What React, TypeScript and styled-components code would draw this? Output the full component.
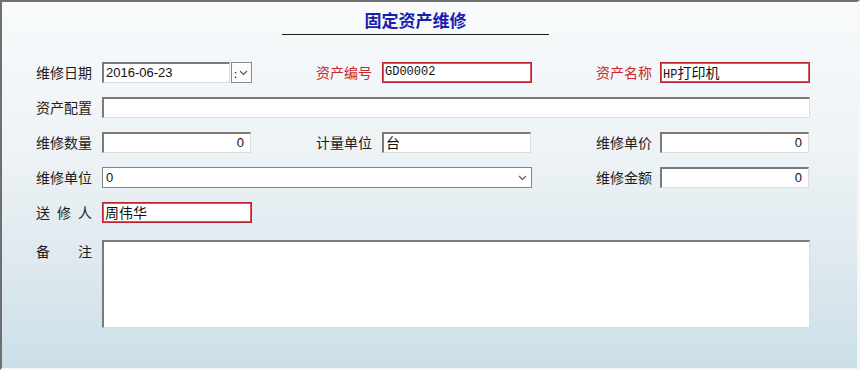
import styled, { createGlobalStyle, css } from "styled-components";

const GlobalStyle = createGlobalStyle`
  html, body {
    margin: 0;
    padding: 0;
    background: #ffffff;
  }
  * {
    box-sizing: border-box;
  }
`;

const Window = styled.div`
  width: 860px;
  height: 370px;
  border-top: 2px solid #6f6f6f;
  border-left: 2px solid #6f6f6f;
  border-right: 3px solid #f4f7f9;
  border-bottom: 2px solid #f4f7f9;
  background: linear-gradient(to bottom, #f8fafb 0%, #eef3f6 40%, #dfe9ef 70%, #cbdfe8 100%);
  font-family: "Noto Sans CJK SC", "Liberation Sans", sans-serif;
  display: flex;
  flex-direction: column;
  align-items: stretch;
`;

const Header = styled.div`
  display: flex;
  justify-content: center;
  padding-top: 7px;
`;

const Title = styled.h1`
  margin: 0;
  width: 267px;
  text-align: center;
  font-size: 17px;
  font-weight: 700;
  line-height: 22px;
  color: #1a20ad;
  padding-bottom: 3px;
  border-bottom: 1px solid #1a1a1a;
  transform: translateX(-14px);
`;

const Form = styled.div`
  display: grid;
  grid-template-columns: 66px 214px 66px 214px 64px 150px;
  grid-auto-rows: 21px;
  row-gap: 14px;
  padding: 27px 0 0 34px;
`;

const Label = styled.div<{ $red?: boolean; $wide?: boolean }>`
  font-size: 14px;
  line-height: 21px;
  color: ${(p) => (p.$red ? "#c8282d" : "#1c1c1c")};
  white-space: nowrap;
  letter-spacing: ${(p) => (p.$wide ? "7px" : "0")};
`;

const sunken = css`
  height: 21px;
  background: #ffffff;
  border-top: 2px solid #7a7a7a;
  border-left: 2px solid #7a7a7a;
  border-right: 1px solid #dcdcdc;
  border-bottom: 1px solid #dcdcdc;
`;

const Field = styled.div<{ $w: number; $red?: boolean; $align?: "right"; $span?: number; $mono?: boolean }>`
  ${sunken}
  width: ${(p) => p.$w}px;
  grid-column: ${(p) => (p.$span ? `span ${p.$span}` : "auto")};
  text-align: ${(p) => p.$align ?? "left"};
  padding: 0 6px 0 2px;
  line-height: 17px;
  font-size: ${(p) => (p.$mono ? "12px" : "13px")};
  color: #111;
  font-family: ${(p) =>
    p.$mono
      ? `"Liberation Mono", "Noto Sans CJK SC", monospace`
      : `"Liberation Sans", "Noto Sans CJK SC", sans-serif`};
  white-space: nowrap;
  overflow: hidden;
  ${(p) =>
    p.$red &&
    css`
      border: 1px solid #b8242b;
      box-shadow: inset 0 0 0 1px #d8555a;
      padding-top: 1px;
    `}
`;

const Han = styled.span`
  font-family: "Noto Sans CJK SC", sans-serif;
  font-size: 14px;
  line-height: 17px;
`;

const DateCell = styled.div`
  display: flex;
  gap: 1px;
`;

const DropButton = styled.div`
  width: 21px;
  height: 21px;
  border: 1px solid #8a8a8a;
  background: #fbfbfb;
  display: flex;
  align-items: center;
  padding-left: 2px;
  gap: 2px;
  font-size: 11px;
  color: #222;
`;

const Select = styled(Field)`
  display: flex;
  align-items: center;
  justify-content: space-between;
  border: 1px solid #858585;
  padding: 0 4px 0 3px;
`;

const NoteRow = styled.div`
  display: flex;
  padding: 17px 0 0 34px;
`;

const NoteLabel = styled(Label)`
  width: 66px;
  display: flex;
  justify-content: space-between;
  padding-right: 10px;
  line-height: 18px;
  padding-top: 2px;
`;

const Note = styled.div`
  width: 708px;
  height: 88px;
  background: #ffffff;
  border-top: 2px solid #7a7a7a;
  border-left: 2px solid #7a7a7a;
  border-right: 1px solid #dcdcdc;
  border-bottom: 1px solid #dcdcdc;
`;

const Chevron = () => (
  <svg width="9" height="6" viewBox="0 0 9 6">
    <path d="M1 1 L4.5 4.5 L8 1" fill="none" stroke="#555" strokeWidth="1.1" />
  </svg>
);

const Empty = styled.div``;

export default function App() {
  return (
    <>
      <GlobalStyle />
      <Window>
        <Header>
          <Title>固定资产维修</Title>
        </Header>
        <Form>
          <Label>维修日期</Label>
          <DateCell>
            <Field $w={128}>2016-06-23</Field>
            <DropButton>
              <span>:</span>
              <Chevron />
            </DropButton>
          </DateCell>
          <Label $red>资产编号</Label>
          <Field $w={150} $red $mono>GD00002</Field>
          <Label $red>资产名称</Label>
          <Field $w={150} $red $mono>
            HP<Han>打印机</Han>
          </Field>

          <Label>资产配置</Label>
          <Field $w={708} $span={5} />

          <Label>维修数量</Label>
          <Field $w={149} $align="right">0</Field>
          <Label>计量单位</Label>
          <Field $w={149}>
            <Han>台</Han>
          </Field>
          <Label>维修单价</Label>
          <Field $w={149} $align="right">0</Field>

          <Label>维修单位</Label>
          <Select $w={430} $span={3}>
            <span>0</span>
            <Chevron />
          </Select>
          <Label>维修金额</Label>
          <Field $w={149} $align="right">0</Field>

          <Label $wide>送修人</Label>
          <Field $w={150} $red>
            <Han>周伟华</Han>
          </Field>
          <Empty />
          <Empty />
          <Empty />
          <Empty />
        </Form>
        <NoteRow>
          <NoteLabel>
            <span>备</span>
            <span>注</span>
          </NoteLabel>
          <Note />
        </NoteRow>
      </Window>
    </>
  );
}
